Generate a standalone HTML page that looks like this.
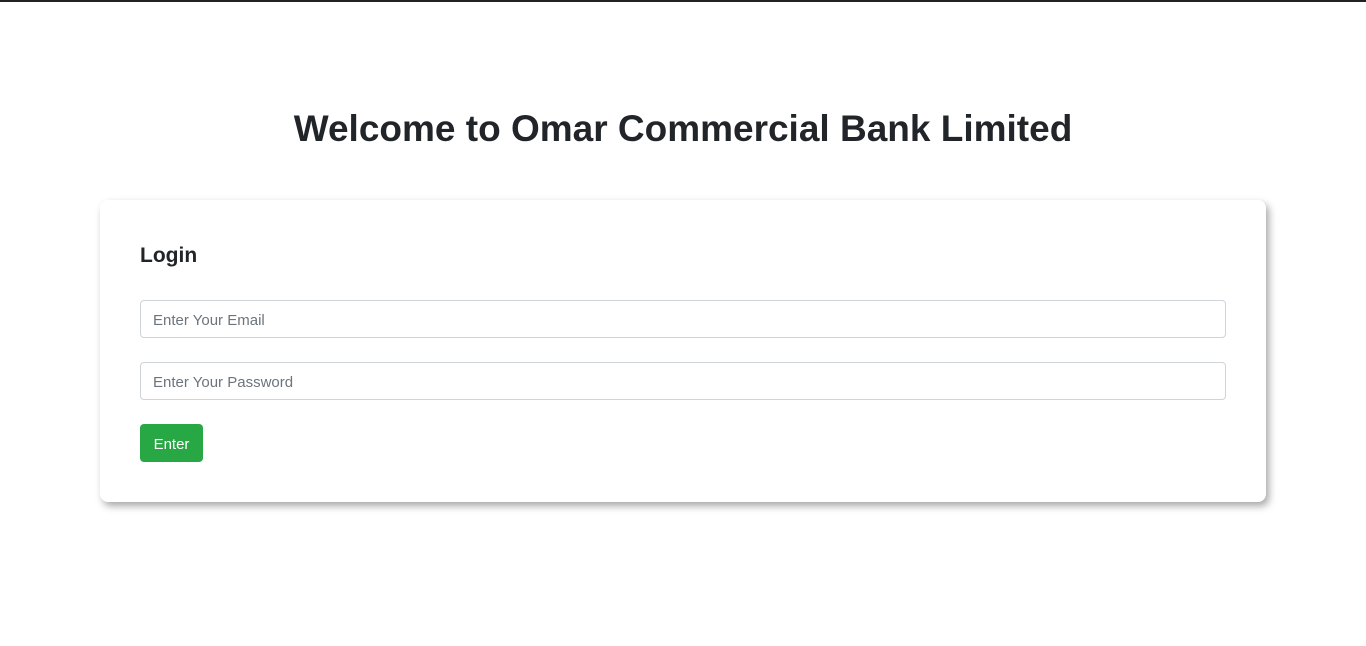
<!DOCTYPE html>
<html><head><meta charset="utf-8"><style>
body{margin:0;background:#fff;font-family:"Liberation Sans",sans-serif;color:#212529;width:1366px;height:646px;overflow:hidden;position:relative}
.top{position:absolute;left:0;top:0;width:1366px;height:2px;background:#222}
h1{position:absolute;top:105px;left:0;width:1366px;text-align:center;margin:0;font-size:37px;font-weight:bold;line-height:48px}
.card{position:absolute;left:100px;top:200px;width:1166px;height:302px;border-radius:8px;box-shadow:3px 4px 8px rgba(0,0,0,.35);background:#fff}
h2{position:absolute;left:40px;top:41px;margin:0;font-size:21px;font-weight:bold;line-height:30px}
.in{position:absolute;left:40px;height:36px;border:1px solid #ced4da;border-radius:4px;font-size:15px;color:#6c757d;line-height:40px;padding-left:12px;box-sizing:content-box;width:1072px}
.btn{position:absolute;left:40px;top:224px;width:63px;height:38px;background:#28a745;color:#fff;border-radius:4px;font-size:15px;text-align:center;line-height:41px}
</style></head><body>
<div class="top"></div>
<h1>Welcome to Omar Commercial Bank Limited</h1>
<div class="card">
<h2>Login</h2>
<div class="in" style="top:100px">Enter Your Email</div>
<div class="in" style="top:162px">Enter Your Password</div>
<div class="btn">Enter</div>
</div>
</body></html>
